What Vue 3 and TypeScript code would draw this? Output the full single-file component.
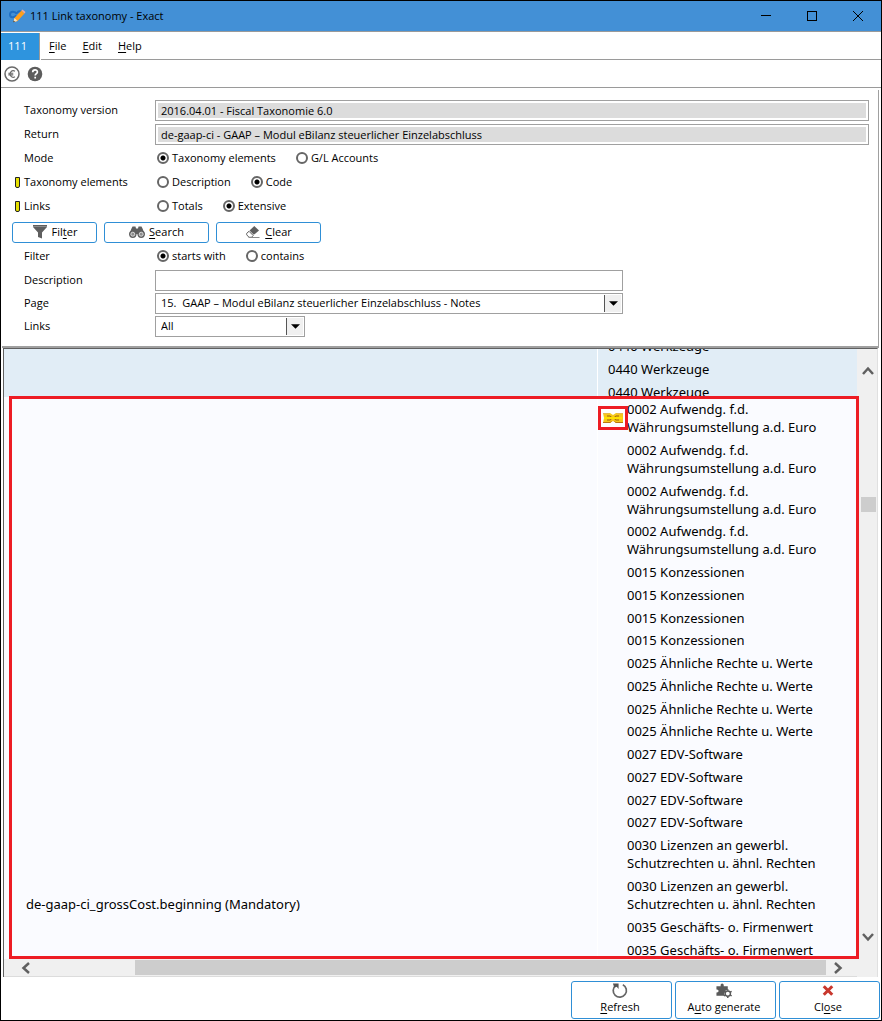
<script setup lang="ts">
import { ref } from 'vue'

interface Account {
  name: string
  count: number
}

const version = ref('2016.04.01 - Fiscal Taxonomie 6.0')
const returnType = ref('de-gaap-ci - GAAP – Modul eBilanz steuerlicher Einzelabschluss')
const description = ref('')
const page = ref('notes')
const linkFilter = ref('all')

const mode = ref('elements')
const elements = ref('code')
const links = ref('extensive')
const match = ref('starts')

const modeOptions = [
  { value: 'elements', label: 'Taxonomy elements' },
  { value: 'accounts', label: 'G/L Accounts' },
]
const elementOptions = [
  { value: 'description', label: 'Description' },
  { value: 'code', label: 'Code' },
]
const linkOptions = [
  { value: 'totals', label: 'Totals' },
  { value: 'extensive', label: 'Extensive' },
]
const matchOptions = [
  { value: 'starts', label: 'starts with' },
  { value: 'contains', label: 'contains' },
]

const accounts: Account[] = [
  { name: '0002 Aufwendg. f.d. Währungsumstellung a.d. Euro', count: 4 },
  { name: '0015 Konzessionen', count: 4 },
  { name: '0025 Ähnliche Rechte u. Werte', count: 4 },
  { name: '0027 EDV-Software', count: 4 },
  { name: '0030 Lizenzen an gewerbl. Schutzrechten u. ähnl. Rechten', count: 2 },
  { name: '0035 Geschäfts- o. Firmenwert', count: 2 },
]
</script>

<template>
  <div class="window">
    <header class="titlebar">
      <svg class="app-icon" viewBox="0 0 17 15" aria-hidden="true">
        <path d="M8 5C6 2 1 2 1 5.500S5 9 7.500 6.500M8 4C9 2.500 10.500 2 12 2.500" fill="none" stroke="#1f6fc4" stroke-width="2" />
        <path d="M4.500 13l1-4 7-7.500 3 3-7 7.500z" fill="#ff9f1c" />
        <path d="M12.500 1.500l1-1 3 2.500-1 1.500z" fill="#f2a9a0" />
        <path d="M4.500 13l1-4 3 3z" fill="#fbe3c0" />
        <path d="M4.200 13.300l.5-1.800 1.300 1.300z" fill="#333" />
      </svg>
      <h1>111 Link taxonomy - Exact</h1>
      <div class="window-controls">
        <button type="button" aria-label="Minimize">
          <svg viewBox="0 0 12 12"><path d="M1 5.500h10" stroke="#000" /></svg>
        </button>
        <button type="button" aria-label="Maximize">
          <svg viewBox="0 0 12 12"><rect x="1.500" y="1.500" width="9" height="9" fill="none" stroke="#000" /></svg>
        </button>
        <button type="button" aria-label="Close window">
          <svg viewBox="0 0 12 12"><path d="M1 1l10 10M11 1L1 11" stroke="#000" /></svg>
        </button>
      </div>
    </header>

    <nav class="menubar">
      <button type="button" class="tab">111</button>
      <div class="menu">
        <button type="button"><u>F</u>ile</button>
        <button type="button"><u>E</u>dit</button>
        <button type="button"><u>H</u>elp</button>
      </div>
    </nav>

    <div class="toolbar">
      <button type="button" aria-label="Currency">
        <svg viewBox="0 0 16 16">
          <circle cx="8" cy="8" r="7" fill="#fff" stroke="#6a6a6a" stroke-width="1.500" />
          <path d="M11 5.300A3.200 3.200 0 1 0 11 10.700M4.300 7.200h5M4.300 8.900h5" fill="none" stroke="#6a6a6a" stroke-width="1.100" />
        </svg>
      </button>
      <button type="button" aria-label="Help topics">
        <svg viewBox="0 0 16 16">
          <circle cx="8" cy="8" r="7.300" fill="#5c5c5c" />
          <path d="M5.700 6.200c0-3 4.700-3 4.700-.3 0 1.700-2.200 1.700-2.200 3.600M8.200 10.800v1.800" fill="none" stroke="#fff" stroke-width="1.700" />
        </svg>
      </button>
    </div>

    <form class="panel" @submit.prevent>
      <div class="row">
        <label for="version">Taxonomy version</label>
        <input id="version" v-model="version" class="field locked" type="text" readonly />
      </div>
      <div class="row">
        <label for="return">Return</label>
        <input id="return" v-model="returnType" class="field locked" type="text" readonly />
      </div>
      <div class="row" role="radiogroup" aria-labelledby="mode-label">
        <span id="mode-label">Mode</span>
        <div class="radios">
          <label v-for="o in modeOptions" :key="o.value">
            <input v-model="mode" type="radio" name="mode" :value="o.value" />{{ o.label }}
          </label>
        </div>
      </div>
      <div class="row" role="radiogroup" aria-labelledby="elements-label">
        <span id="elements-label" class="marked">Taxonomy elements</span>
        <div class="radios">
          <label v-for="o in elementOptions" :key="o.value">
            <input v-model="elements" type="radio" name="elements" :value="o.value" />{{ o.label }}
          </label>
        </div>
      </div>
      <div class="row" role="radiogroup" aria-labelledby="links-label">
        <span id="links-label" class="marked">Links</span>
        <div class="radios">
          <label v-for="o in linkOptions" :key="o.value">
            <input v-model="links" type="radio" name="links" :value="o.value" />{{ o.label }}
          </label>
        </div>
      </div>

      <div class="actions">
        <button type="button" class="btn narrow">
          <svg viewBox="0 0 16 16"><path d="M1 1h14v2L10 8.500V14.500L6 13V8.500L1 3z" fill="#5f5f5f" /><path d="M1 2.500h14" stroke="#8c8c8c" /></svg>
          <span>Fil<u>t</u>er</span>
        </button>
        <button type="button" class="btn">
          <svg viewBox="0 0 16 16">
            <path d="M2.500 4.500l1-2h3l.5 2h2l.5-2h3l1 2 2.200 5.500H.3z" fill="#5f5f5f" />
            <circle cx="3.800" cy="10.200" r="3.700" fill="#5f5f5f" />
            <circle cx="12.200" cy="10.200" r="3.700" fill="#5f5f5f" />
            <circle cx="3.800" cy="10.200" r="2" fill="#8d8d8d" stroke="#fff" stroke-width=".7" />
            <circle cx="12.200" cy="10.200" r="2" fill="#8d8d8d" stroke="#fff" stroke-width=".7" />
          </svg>
          <span><u>S</u>earch</span>
        </button>
        <button type="button" class="btn">
          <svg viewBox="0 0 16 16">
            <path d="M9.300 2l4.700 4.500-5.200 4.300L4.500 6.500z" fill="#5f5f5f" />
            <path d="M4 7.300l4.200 4.200-1.700 1.800H4L1.700 10.800v-1.500z" fill="#fff" stroke="#5f5f5f" />
            <path d="M3.500 13.500h11" stroke="#8a8a8a" />
          </svg>
          <span><u>C</u>lear</span>
        </button>
      </div>

      <div class="row" role="radiogroup" aria-labelledby="match-label">
        <span id="match-label">Filter</span>
        <div class="radios">
          <label v-for="o in matchOptions" :key="o.value">
            <input v-model="match" type="radio" name="match" :value="o.value" />{{ o.label }}
          </label>
        </div>
      </div>
      <div class="row">
        <label for="description">Description</label>
        <input id="description" v-model="description" class="field medium" type="text" />
      </div>
      <div class="row tight">
        <label for="page">Page</label>
        <div class="select medium">
          <select id="page" v-model="page">
            <option value="notes">15.&nbsp; GAAP – Modul eBilanz steuerlicher Einzelabschluss - Notes</option>
          </select>
          <span class="arrow"><svg viewBox="0 0 10 5"><path d="M0 0h10L5 5z" /></svg></span>
        </div>
      </div>
      <div class="row tight">
        <label for="link-filter">Links</label>
        <div class="select small">
          <select id="link-filter" v-model="linkFilter">
            <option value="all">All</option>
          </select>
          <span class="arrow"><svg viewBox="0 0 10 5"><path d="M0 0h10L5 5z" /></svg></span>
        </div>
      </div>
    </form>

    <main class="list">
      <table>
        <colgroup>
          <col />
          <col class="accounts-col" />
        </colgroup>
        <tbody>
          <tr class="previous">
            <td></td>
            <td>
              <div class="clip">
                <ul>
                  <li v-for="n in 3" :key="n">0440 Werkzeuge</li>
                </ul>
              </div>
            </td>
          </tr>
          <tr class="current">
            <td class="code">de-gaap-ci_grossCost.beginning (Mandatory)</td>
            <td>
              <span class="link-mark">
                <svg viewBox="0 0 20 12" aria-hidden="true">
                  <path d="M0 1h7l3 2 3-2h7v10h-7l-3-2-3 2H0l1-5z" fill="#f7c81c" />
                  <path d="M0 1.500h6M14 1.500h6" stroke="#e9b84a" />
                  <path d="M0 10.500h7l1.500-1M20 10.500h-7l-1.500-1" fill="none" stroke="#b9770f" />
                  <path d="M4 4h3l1.500 1M16 4h-3l-1.500 1M4 8h3l1.500-1M16 8h-3l-1.500-1" fill="none" stroke="#9a6208" />
                  <path d="M1 6h18" stroke="#ffe100" stroke-width="2" />
                </svg>
              </span>
              <ul v-for="a in accounts" :key="a.name">
                <li v-for="n in a.count" :key="n">{{ a.name }}</li>
              </ul>
            </td>
          </tr>
        </tbody>
      </table>

      <div class="vscroll">
        <button type="button" aria-label="Scroll up">
          <svg viewBox="0 0 12 10"><path d="M1 8l5-5.500L11 8" /></svg>
        </button>
        <div class="track"><div class="thumb"></div></div>
        <button type="button" aria-label="Scroll down">
          <svg viewBox="0 0 12 10"><path d="M1 2l5 5.500L11 2" /></svg>
        </button>
      </div>
      <div class="hscroll">
        <button type="button" aria-label="Scroll left">
          <svg viewBox="0 0 10 12"><path d="M8 1L2.500 6 8 11" /></svg>
        </button>
        <div class="thumb"></div>
        <button type="button" aria-label="Scroll right">
          <svg viewBox="0 0 10 12"><path d="M2 1l5.500 5L2 11" /></svg>
        </button>
      </div>
      <div class="highlight"></div>
    </main>

    <footer class="footer">
      <button type="button" class="btn tall">
        <svg viewBox="0 0 18 18">
          <path d="M4.500 3.500A7 7 0 1 0 12 2.800" fill="none" stroke="#666" stroke-width="1.800" />
          <path d="M1.500 1.500h6v6L5.500 5 3 6z" fill="#555" />
        </svg>
        <span><u>R</u>efresh</span>
      </button>
      <button type="button" class="btn tall">
        <svg viewBox="0 0 18 18">
          <path d="M1 4.500h4.500C4.500.5 9.500.5 8.700 4.500H13v4c-3 0-4 2-3.700 6H1V11c3 .5 3-3.500 0-3z" fill="#5a5a5a" />
          <circle cx="13" cy="12.300" r="2.800" fill="#fff" stroke="#5a5a5a" stroke-width="1.500" />
          <path d="M13 7.600v1.700M13 15.300v1.700M8.900 9.900l1.500.9M15.600 13.800l1.500.9M8.900 14.700l1.500-.9M15.600 10.800l1.500-.9" stroke="#5a5a5a" stroke-width="1.600" />
        </svg>
        <span>A<u>u</u>to generate</span>
      </button>
      <button type="button" class="btn tall">
        <svg viewBox="0 0 18 18"><path d="M4.500 4.500l9 9M13.500 4.500l-9 9" stroke="#c8372d" stroke-width="3.200" /></svg>
        <span>Cl<u>o</u>se</span>
      </button>
    </footer>
  </div>
</template>

<style>
body {
  margin: 0;
}
</style>

<style scoped>
* {
  box-sizing: border-box;
}
.window {
  display: flex;
  flex-direction: column;
  min-height: 100vh;
  border: 1px solid #000;
  background: #fff;
  color: #000;
  font: 11px/16px "Open Sans", "Noto Sans", sans-serif;
}
button,
input,
select {
  margin: 0;
  font: inherit;
  color: inherit;
}
button {
  padding: 0;
  border: 0;
  background: none;
}
svg {
  display: block;
}
u {
  text-underline-offset: 2px;
}

.titlebar {
  display: flex;
  align-items: center;
  height: 31px;
  padding-left: 8px;
  border-bottom: 1px solid #9a9a9a;
  background: #4390d6;
}
.app-icon {
  width: 17px;
  height: 15px;
}
h1 {
  flex: 1;
  margin: 0 0 0 4px;
  font-size: 11px;
  font-weight: 400;
}
.window-controls {
  display: flex;
}
.window-controls button {
  display: grid;
  place-items: center;
  width: 46px;
  height: 29px;
}
.window-controls svg {
  width: 12px;
  height: 12px;
}

.menubar {
  display: flex;
  height: 28px;
  padding-top: 1px;
}
.tab {
  width: 39px;
  padding: 0 5px 2px 0;
  border-right: 1px solid #9a9a9a;
  background: #2e94de;
  color: #fff;
}
.menu {
  display: flex;
  flex: 1;
  gap: 16px;
  margin-left: 1px;
  padding-left: 8px;
  border-bottom: 1px solid #9a9a9a;
}
.toolbar {
  display: flex;
  align-items: center;
  gap: 7px;
  height: 28px;
  padding-left: 3px;
  border-bottom: 1px solid #9a9a9a;
}
.toolbar svg {
  width: 16px;
  height: 16px;
}

.panel {
  margin: 2px 2px 0 1px;
  padding: 8px 9px 8px 22px;
  border-right: 1px solid #a0a0a0;
  border-bottom: 2px solid #a0a0a0;
}
.row {
  display: grid;
  grid-template-columns: 131px 1fr;
  align-items: center;
  height: 24px;
}
.row.tight {
  height: 23px;
}
.row.tight > label {
  padding-bottom: 1px;
}
.marked::before {
  content: "";
  float: left;
  width: 3px;
  height: 9px;
  margin: 3px 0 0 -9px;
  border: 1px solid #222;
  border-radius: 0 0 2px 2px;
  background: #e6e000;
}
.field {
  width: 100%;
  height: 21px;
  padding: 2px;
  border: 1px solid #a0a0a0;
  border-radius: 0;
  outline: 0;
  background: #fff;
  text-indent: 3px;
}
.locked {
  background: #dcdcdc content-box;
}
.medium {
  width: 468px;
}
.small {
  width: 150px;
}
.radios {
  display: flex;
  gap: 20px;
  padding-left: 2px;
}
.radios label {
  display: flex;
  align-items: center;
  gap: 3px;
}
.radios input {
  appearance: none;
  width: 12px;
  height: 12px;
  border: 2px solid #666;
  border-radius: 50%;
  background: #fff;
}
.radios input:checked {
  background: radial-gradient(circle, #000 0 2px, #fff 3px);
}
.select {
  display: flex;
  height: 21px;
  position: relative;
}
.select select {
  appearance: none;
  width: 100%;
  padding: 0 20px 1px 5px;
  border: 1px solid #a0a0a0;
  border-radius: 0;
  background: #fff;
}
.arrow {
  position: absolute;
  top: 2px;
  right: 2px;
  bottom: 2px;
  display: grid;
  place-items: center;
  width: 17px;
  border-left: 1px solid #555;
  background: #f0f0f0;
  pointer-events: none;
}
.arrow svg {
  width: 9px;
  height: 5px;
}
.actions {
  display: flex;
  gap: 7px;
  height: 26px;
  margin-left: -12px;
  padding-top: 4px;
}
.btn {
  display: flex;
  justify-content: center;
  align-items: center;
  gap: 4px;
  width: 105px;
  height: 21px;
  padding-bottom: 1px;
  border: 1px solid #2f8fd6;
  border-radius: 3px;
  background: #fff;
}
.btn.narrow {
  width: 85px;
}
.btn svg {
  width: 16px;
  height: 16px;
}

.list {
  position: relative;
  display: grid;
  grid-template-columns: 1fr 20px;
  grid-template-rows: auto 18px;
  margin: 0 3px 0 2px;
  border-top: 1px solid #606060;
  border-left: 1px solid #606060;
  border-right: 1px solid #e0e0e0;
  background: #f0f0f0;
}
table {
  width: 100%;
  border-spacing: 0;
  table-layout: fixed;
  font-family: "Noto Sans", "Open Sans", sans-serif;
  font-size: 13px;
  line-height: 18px;
}
.accounts-col {
  width: 260px;
}
td {
  position: relative;
  padding: 0;
  vertical-align: top;
}
td + td {
  border-left: 1px solid #fff;
}
.previous td {
  background: #e1edf6;
}
.clip {
  height: 48px;
  overflow: hidden;
}
.clip ul {
  margin: -12px 0 0 10px;
}
.current td {
  padding: 3px 20px 0 29px;
  background: #fafbff;
}
.current .code {
  padding: 0 0 46px 22px;
  vertical-align: bottom;
}
ul {
  margin: 0;
  padding: 0;
  list-style: none;
}
li {
  padding-bottom: 5px;
}
li:nth-child(3) {
  padding-bottom: 4px;
}
ul:last-child li:last-child {
  padding-bottom: 0;
}
.link-mark {
  position: absolute;
  z-index: 2;
  top: 9px;
  left: 0;
  display: grid;
  place-items: center;
  width: 30px;
  height: 24px;
  border: 3px solid #ed1c24;
  background: #fff;
}
.link-mark svg {
  width: 20px;
  height: 12px;
}
.highlight {
  position: absolute;
  inset: 47px 18px 18px 5px;
  border: 3px solid #ed1c24;
  pointer-events: none;
}
.vscroll {
  display: flex;
  flex-direction: column;
  margin-left: 2px;
}
.vscroll button,
.hscroll button {
  display: grid;
  place-items: center;
}
.vscroll button {
  height: 44px;
}
.vscroll svg {
  width: 12px;
  height: 10px;
}
.vscroll path,
.hscroll path {
  fill: none;
  stroke: #606060;
  stroke-width: 2.5;
}
.track {
  flex: 1;
  padding-top: 104px;
}
.thumb {
  background: #cdcdcd;
}
.vscroll .thumb {
  width: 15px;
  height: 15px;
  margin-left: 2px;
}
.hscroll {
  display: flex;
  align-items: center;
  border-bottom: 1px solid #dcdcdc;
}
.hscroll button {
  width: 24px;
  height: 17px;
}
.hscroll button:first-child {
  margin-left: 10px;
}
.hscroll button:last-child {
  margin-right: 7px;
}
.hscroll svg {
  width: 10px;
  height: 12px;
}
.hscroll .thumb {
  flex: 1;
  height: 15px;
  margin-left: 97px;
}

.footer {
  display: flex;
  justify-content: flex-end;
  gap: 3px;
  padding: 4px 1px 1px;
}
.btn.tall {
  flex-direction: column;
  gap: 0;
  width: 101px;
  height: 38px;
  padding: 0 3px 3px 0;
}
.tall svg {
  width: 18px;
  height: 18px;
}
</style>
